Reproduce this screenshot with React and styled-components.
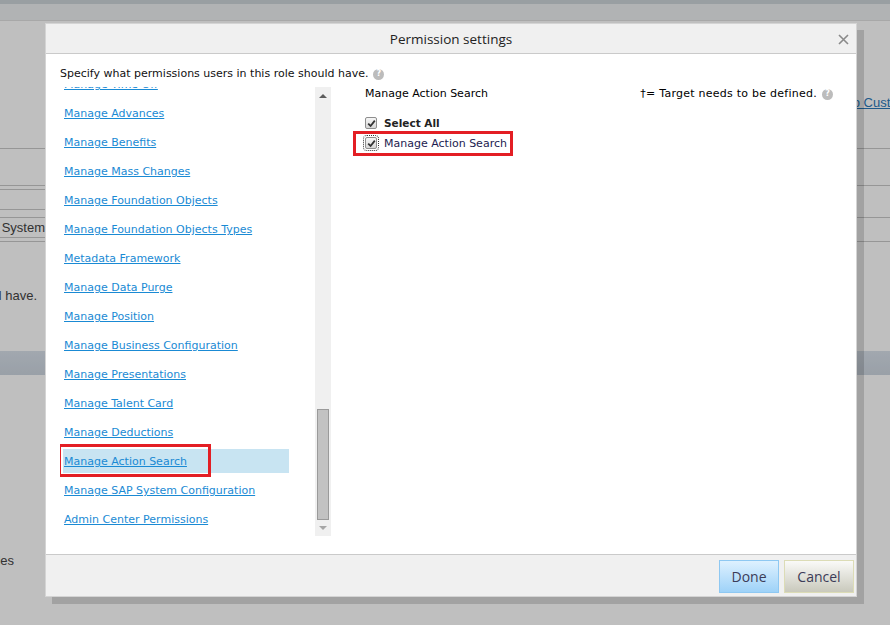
import React from 'react';
import styled, { createGlobalStyle } from 'styled-components';

const GlobalStyle = createGlobalStyle`
  html, body { margin: 0; padding: 0; background: #fff; }
  body { font-family: "DejaVu Sans", Verdana, sans-serif; }
  #root { width: 890px; height: 625px; overflow: hidden; }
`;

/* ---------- page behind the modal ---------- */

const Page = styled.div`
  position: relative;
  width: 890px;
  height: 625px;
  overflow: hidden;
  background: #fff;
  font-family: "Liberation Sans", Arial, sans-serif;
  font-size: 13px;
  color: #444;
`;

const TopBar = styled.div`
  height: 16px;
  border-top: 4px solid #cdd5d8;
  border-bottom: 1px solid #e0e0e0;
  background: #edeff1;
`;

const BgRow = styled.div`
  display: flex;
  justify-content: space-between;
  height: ${p => p.$h}px;
  background: ${p => (p.$band ? 'linear-gradient(#d8e0ea, #cdd6e0)' : 'transparent')};
`;

const BgCell = styled.div`
  box-sizing: content-box;
  width: ${p => p.$w}px;
  height: ${p => p.$h}px;
  overflow: hidden;
  white-space: nowrap;
  display: flex;
  align-items: center;
  justify-content: ${p => (p.$end ? 'flex-end' : 'flex-start')};
  line-height: 14px;
  border-bottom: ${p => (p.$line ? '1px solid #c8c8c8' : 'none')};
`;

const BgLink = styled.span`
  color: #2a78b8;
  text-decoration: underline;
  margin-left: -26px;
`;

const Overlay = styled.div`
  position: absolute;
  inset: 0;
  background: rgba(0, 0, 0, 0.25);
`;

/* ---------- dialog ---------- */

const Dialog = styled.div`
  position: absolute;
  left: 45px;
  top: 23px;
  width: 812px;
  height: 574px;
  box-sizing: border-box;
  border: 1px solid #d4d4d4;
  background: #fff;
  box-shadow: 7px 7px 0 rgba(0, 0, 0, 0.15);
  display: flex;
  flex-direction: column;
  color: #111;
  font-family: "DejaVu Sans", Verdana, sans-serif;
  font-size: 11px;
`;

const TitleBar = styled.div`
  height: 29px;
  flex: none;
  display: flex;
  align-items: center;
  justify-content: center;
  position: relative;
  background: #f0f0f0;
  border-bottom: 1px solid #cacaca;
  font-family: "Open Sans", "Liberation Sans", sans-serif;
  font-size: 13.5px;
  color: #222;
`;

const Close = styled.button`
  position: absolute;
  right: 6px;
  top: 8px;
  width: 14px;
  height: 14px;
  padding: 0;
  border: 0;
  background: none;
  display: flex;
  align-items: center;
  justify-content: center;
`;

const Body = styled.div`
  height: 500px;
  flex: none;
  box-sizing: border-box;
  padding: 12px 23px 0 14px;
  display: flex;
  flex-direction: column;
`;

const Intro = styled.div`
  display: flex;
  align-items: center;
  gap: 5px;
  line-height: 16px;
  height: 16px;
  color: #111;
`;

const Help = styled.span`
  width: 11px;
  height: 11px;
  border-radius: 50%;
  background: #bcbcbc;
  color: #fff;
  font-size: 8px;
  font-weight: bold;
  letter-spacing: 0;
  display: inline-flex;
  align-items: center;
  justify-content: center;
  flex: none;
`;

const Columns = styled.div`
  display: flex;
  margin-top: 5px;
`;

const ListPanel = styled.div`
  display: flex;
  width: 271px;
  height: 449px;
  flex: none;
`;

const ListViewport = styled.div`
  width: 252px;
  padding-left: 3px;
  overflow: hidden;
`;

const List = styled.div`
  margin-top: ${p => p.$offset}px;
  display: flex;
  flex-direction: column;
  gap: 5px;
`;

const Item = styled.div`
  position: relative;
  width: 226px;
  height: 24px;
  flex: none;
  display: flex;
  align-items: center;
  padding: 2px 0 0 1px;
  box-sizing: border-box;
  background: ${p => (p.$selected ? '#c8e4f2' : 'transparent')};
`;

const ItemLink = styled.a`
  color: #1a8ad4;
  text-decoration: underline;
  white-space: nowrap;
  line-height: 14px;
`;

const Marker = styled.div`
  position: absolute;
  left: ${p => p.$left}px;
  top: ${p => p.$top}px;
  width: ${p => p.$w}px;
  height: ${p => p.$h}px;
  box-sizing: border-box;
  border: 3px solid #e31e24;
  pointer-events: none;
`;

const ScrollTrack = styled.div`
  width: 16px;
  flex: none;
  background: #f0f0f0;
  display: flex;
  flex-direction: column;
  align-items: center;
`;

const Arrow = styled.div`
  height: 16px;
  width: 16px;
  flex: none;
  display: flex;
  align-items: center;
  justify-content: center;
`;

const Thumb = styled.div`
  margin-top: auto;
  width: 12px;
  height: 111px;
  box-sizing: border-box;
  border: 1px solid #9a9a9a;
  background: #c2c2c2;
`;

const DetailPanel = styled.div`
  flex: 1;
  margin-left: 34px;
  display: flex;
  flex-direction: column;
`;

const DetailHead = styled.div`
  display: flex;
  justify-content: space-between;
  align-items: center;
  height: 14px;
  line-height: 14px;
  color: #000;
`;

const Legend = styled.div`
  display: flex;
  align-items: center;
  gap: 5px;
  letter-spacing: 0.25px;
`;

const Checks = styled.div`
  margin-top: 12px;
  display: flex;
  flex-direction: column;
`;

const CheckRow = styled.label`
  position: relative;
  height: 20px;
  display: flex;
  align-items: center;
  gap: 7px;
  color: ${p => (p.$strong ? '#222' : '#1c1c50')};
  font-weight: ${p => (p.$strong ? 'bold' : 'normal')};
  font-size: ${p => (p.$strong ? '10.5px' : '11px')};
`;

const Box = styled.span`
  width: 12px;
  height: 12px;
  box-sizing: border-box;
  flex: none;
  border: 1px solid #8e8e8e;
  border-radius: 2px;
  background: linear-gradient(#f6f6f6, #d6d6d6);
  display: inline-flex;
  align-items: center;
  justify-content: center;
  outline: ${p => (p.$focused ? '1px dotted #333' : 'none')};
  outline-offset: 1px;
`;

const Footer = styled.div`
  flex: 1;
  border-top: 1px solid #cacaca;
  background: #f0f0f0;
  display: flex;
  justify-content: flex-end;
  align-items: flex-start;
  gap: 5px;
  padding: 5px 2px 0 0;
`;

const Button = styled.button`
  height: 33px;
  width: ${p => p.$w}px;
  box-sizing: border-box;
  font-family: "Open Sans", "Liberation Sans", sans-serif;
  font-size: 14px;
  color: #3c3c58;
  border: 1px solid ${p => (p.$primary ? '#8ec8f2' : '#dcdcb6')};
  background: ${p =>
    p.$primary
      ? 'linear-gradient(#def1ff, #9ed2f8)'
      : 'linear-gradient(#fafaf8, #c9c9bc)'};
  padding: 0;
`;

const permissions = [
  'Manage Time Off',
  'Manage Advances',
  'Manage Benefits',
  'Manage Mass Changes',
  'Manage Foundation Objects',
  'Manage Foundation Objects Types',
  'Metadata Framework',
  'Manage Data Purge',
  'Manage Position',
  'Manage Business Configuration',
  'Manage Presentations',
  'Manage Talent Card',
  'Manage Deductions',
  'Manage Action Search',
  'Manage SAP System Configuration',
  'Admin Center Permissions',
];

const Check = () => (
  <svg width="9" height="9" viewBox="0 0 9 9">
    <path d="M1.2 4.6 L3.6 7 L7.8 1.6" fill="none" stroke="#333" strokeWidth="1.8" />
  </svg>
);

const Background = () => (
  <>
    <TopBar />
    <BgRow $h={74} />
    <BgRow $h={15}>
      <BgCell $w={45} $h={15} />
      <BgCell $w={38} $h={15}>
        <BgLink>Setup Custom Fields</BgLink>
      </BgCell>
    </BgRow>
    <BgRow $h={39}>
      <BgCell $w={45} $h={38} $line />
      <BgCell $w={33} $h={38} $line />
    </BgRow>
    <BgRow $h={37}>
      <BgCell $w={45} $h={36} $line />
      <BgCell $w={33} $h={36} $line />
    </BgRow>
    <BgRow $h={4}>
      <BgCell $w={45} $h={3} $line />
    </BgRow>
    <BgRow $h={20}>
      <BgCell $w={45} $h={19} $line />
    </BgRow>
    <BgRow $h={8}>
      <BgCell $w={45} $h={7} $line />
      <BgCell $w={33} $h={7} $line />
    </BgRow>
    <BgRow $h={20}>
      <BgCell $w={45} $h={19} $line $end>Operating System</BgCell>
    </BgRow>
    <BgRow $h={4}>
      <BgCell $w={45} $h={3} $line />
      <BgCell $w={33} $h={3} $line />
    </BgRow>
    <BgRow $h={47} />
    <BgRow $h={14}>
      <BgCell $w={37} $h={14} $end>users in this role should have.</BgCell>
    </BgRow>
    <BgRow $h={48} />
    <BgRow $h={24} $band />
    <BgRow $h={179} />
    <BgRow $h={14}>
      <BgCell $w={14} $h={14} $end>Manage Roles</BgCell>
    </BgRow>
  </>
);

const App = () => (
  <Page>
    <GlobalStyle />
    <Background />
    <Overlay />
    <Dialog>
      <TitleBar>
        Permission settings
        <Close aria-label="Close">
          <svg width="11" height="11" viewBox="0 0 11 11">
            <path d="M1 1 L10 10 M10 1 L1 10" stroke="#8a8a8a" strokeWidth="1.6" />
          </svg>
        </Close>
      </TitleBar>
      <Body>
        <Intro>
          Specify what permissions users in this role should have.
          <Help>?</Help>
        </Intro>
        <Columns>
          <ListPanel>
            <ListViewport>
              <List $offset={-15}>
                {permissions.map(name => (
                  <Item key={name} $selected={name === 'Manage Action Search'}>
                    <ItemLink href="#">{name}</ItemLink>
                    {name === 'Manage Action Search' && (
                      <Marker $left={-5} $top={-5} $w={153} $h={33} />
                    )}
                  </Item>
                ))}
              </List>
            </ListViewport>
            <ScrollTrack>
              <Arrow>
                <svg width="8" height="5" viewBox="0 0 8 5">
                  <path d="M0 5 L4 1 L8 5 Z" fill="#5c5c5c" />
                </svg>
              </Arrow>
              <Thumb />
              <Arrow>
                <svg width="8" height="5" viewBox="0 0 8 5">
                  <path d="M0 0 L4 4 L8 0 Z" fill="#a6a6a6" />
                </svg>
              </Arrow>
            </ScrollTrack>
          </ListPanel>
          <DetailPanel>
            <DetailHead>
              <span>Manage Action Search</span>
              <Legend>
                †= Target needs to be defined.
                <Help>?</Help>
              </Legend>
            </DetailHead>
            <Checks>
              <CheckRow $strong>
                <Box>
                  <Check />
                </Box>
                Select All
              </CheckRow>
              <CheckRow>
                <Box $focused>
                  <Check />
                </Box>
                Manage Action Search
                <Marker $left={-12} $top={-2} $w={160} $h={25} />
              </CheckRow>
            </Checks>
          </DetailPanel>
        </Columns>
      </Body>
      <Footer>
        <Button $primary $w={60}>Done</Button>
        <Button $w={70}>Cancel</Button>
      </Footer>
    </Dialog>
  </Page>
);

export default App;
